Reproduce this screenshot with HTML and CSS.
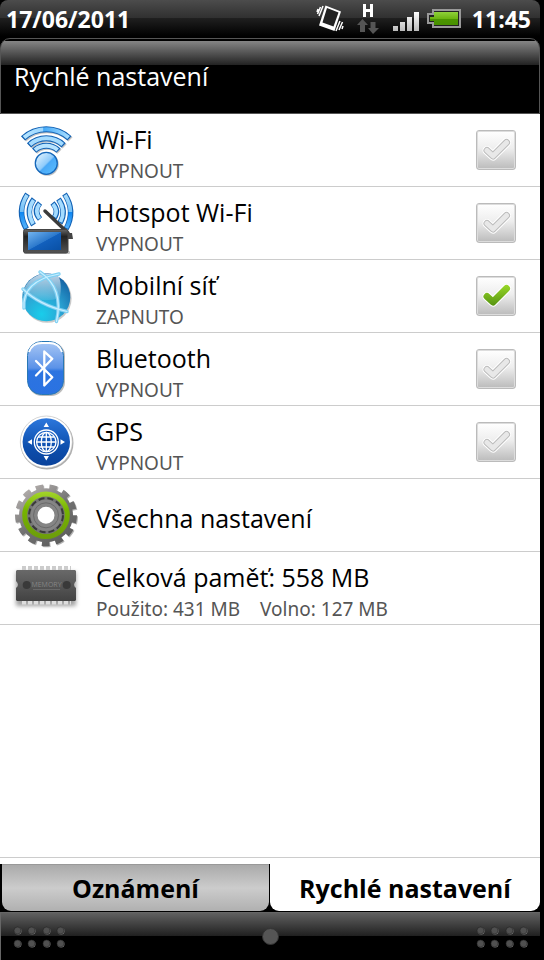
FILE: index.html
```
<!DOCTYPE html>
<html lang="cs">
<head>
  <meta charset="UTF-8">
  <meta name="viewport" content="width=device-width, initial-scale=1">
  <title>Rychlé nastavení</title>
  <link rel="stylesheet" href="styles.css">
</head>
<body>
  <div class="screen">
    <div class="status">
      <span class="date">17/06/2011</span>
      <div class="status-icons">
        <svg width="28" height="32" viewBox="0 0 28 32">
          <path d="M9.500 5.500 L25 11.500 L18.500 31 L3 25.500 Z" fill="#fff"/>
          <path d="M11 8 L22.500 12.500 L17.500 26.500 L6.500 22.500 Z" fill="#222"/>
          <path d="M7 6 L3 16 M4.500 7 L1.500 14 M2 9 L1 12 M24 21 L20 31 M26.500 22 L23 30 M27 26 L26 29" stroke="#fff" stroke-width="1.500"/>
        </svg>
        <svg width="24" height="32" viewBox="0 0 24 32">
          <path d="M8.500 4 V17 M15.500 4 V17 M8.500 10.500 H15.500" stroke="#fff" stroke-width="3" fill="none"/>
          <path d="M6.500 19 L12 25 H9 V32 H4 V25 H1 Z M14.500 22 H19.500 V28 H23 L17 34 L12 28 H14.500 Z" fill="#555"/>
        </svg>
        <svg width="24" height="32" viewBox="0 0 24 32">
          <defs><linearGradient id="sig" x1="0" y1="0" x2="0" y2="1"><stop offset="0" stop-color="#fff"/><stop offset="1" stop-color="#bbb"/></linearGradient></defs>
          <path d="M1 26 H6 V31 H1 Z M8 22 H13 V31 H8 Z M15 17 H20 V31 H15 Z M22 12 H27 V31 H22 Z" fill="url(#sig)"/>
        </svg>
        <svg width="34" height="32" viewBox="0 0 34 32">
          <defs><linearGradient id="bat" x1="0" y1="0" x2="0" y2="1"><stop offset="0" stop-color="#8fd23a"/><stop offset=".5" stop-color="#6db512"/><stop offset=".51" stop-color="#4c9600"/><stop offset="1" stop-color="#479000"/></linearGradient></defs>
          <path d="M5 11 H32 V28 H5 V24 H0 V15 H5 Z" fill="#222" stroke="#999" stroke-width="2"/>
          <path d="M6 13 H30 V26 H6 V22 H2 V18 H6 Z" fill="url(#bat)"/>
        </svg>
      </div>
      <span class="clock">11:45</span>
    </div>

    <header class="header"><h1>Rychlé nastavení</h1></header>

    <main class="list">
      <div class="row">
        <svg class="icon" viewBox="0 0 64 64">
          <defs>
            <linearGradient id="wave" x1="0" x2="1"><stop offset="0" stop-color="#b5e4ff"/><stop offset=".42" stop-color="#9bd6ff"/><stop offset=".44" stop-color="#45aaf8"/><stop offset="1" stop-color="#a5dcff"/></linearGradient>
            <linearGradient id="ball" x1="0" y1="0" x2="1" y2="1"><stop offset="0" stop-color="#f0faff"/><stop offset=".5" stop-color="#8fcbfb"/><stop offset=".55" stop-color="#4aa9f7"/><stop offset="1" stop-color="#5cc0ff"/></linearGradient>
          </defs>
          <g fill="none" stroke="#888" stroke-width="6" opacity=".5" transform="translate(1 1)">
            <path d="M9 20.400 A34 34 0 0 1 55.500 20.400 M15 27.300 A25 25 0 0 1 49.600 27.300 M20.100 32.700 A17.500 17.500 0 0 1 44.500 32.700"/>
          </g>
          <g fill="none" stroke="#1262b5" stroke-width="6" stroke-linejoin="round">
            <path d="M9 20.400 A34 34 0 0 1 55.500 20.400 M15 27.300 A25 25 0 0 1 49.600 27.300 M20.100 32.700 A17.500 17.500 0 0 1 44.500 32.700"/>
          </g>
          <g fill="none" stroke="url(#wave)" stroke-width="4">
            <path d="M10 19.600 A34 34 0 0 1 54.600 19.600"/>
            <path d="M15.900 26.500 A25 25 0 0 1 48.700 26.500" stroke="#a5dcff"/>
            <path d="M21 32 A17.500 17.500 0 0 1 43.600 32" stroke="#b8e4ff"/>
          </g>
          <circle cx="33.300" cy="46.300" r="11.500" fill="#888" opacity=".5"/>
          <circle cx="32.300" cy="45.300" r="11" fill="url(#ball)" stroke="#1567ba" stroke-width="1.300"/>
        </svg>
        <div class="text">
          <label class="title" for="wifi">Wi-Fi</label>
          <span class="sub">VYPNOUT</span>
        </div>
        <div class="check">
          <input type="checkbox" id="wifi">
          <svg viewBox="0 0 40 40"><path class="edge" d="M11 20.500 L17 26 L30.500 12.500"/><path class="rim" d="M11 20.500 L17 26 L30.500 12.500"/><path class="tick" d="M11 20.500 L17 26 L30.500 12.500"/></svg>
        </div>
      </div>

      <div class="row">
        <svg class="icon" viewBox="0 0 64 64">
          <defs>
            <linearGradient id="side" x1="0" y1="0" x2="0" y2="1"><stop offset="0" stop-color="#a9dcfb"/><stop offset=".5" stop-color="#72bff7"/><stop offset=".52" stop-color="#0d86f2"/><stop offset="1" stop-color="#54b2fb"/></linearGradient>
            <linearGradient id="tab" x1="0" y1="0" x2="1" y2="1"><stop offset="0" stop-color="#73b4ef"/><stop offset=".5" stop-color="#2c79cc"/><stop offset=".52" stop-color="#1260bd"/><stop offset="1" stop-color="#0950a5"/></linearGradient>
            <linearGradient id="dev" x1="0" y1="0" x2="0" y2="1"><stop offset="0" stop-color="#666"/><stop offset=".3" stop-color="#222"/><stop offset="1" stop-color="#555"/></linearGradient>
          </defs>
          <g fill="none" stroke="#1262b5" stroke-width="5.500">
            <path d="M13.500 3 Q2 20 12.500 38 M20 8 Q11 20 19.500 34 M26 12 Q19 20 26 28 M50.500 3 Q62 20 52 38 M44.500 8 Q53 20 46 32 M38.500 12 Q45.500 20 40 27"/>
          </g>
          <g fill="none" stroke-width="3.700">
            <path stroke="url(#side)" d="M13 4 Q3 20 12 37"/>
            <path stroke="url(#side)" d="M51 4 Q61 20 52.500 37"/>
            <path stroke="#a5dcff" d="M19.500 9 Q12 20 19 33 M25.500 13 Q20 20 25.500 27.500 M45 9 Q52 20 46.500 31 M39 13 Q44.500 20 40.500 26"/>
          </g>
          <path d="M31 20 L54 42" stroke="#3b3b3b" stroke-width="3.500" stroke-linecap="round"/>
          <path d="M50 42 H58 L59 48 H52 Z" fill="#444"/>
          <rect x="10" y="60" width="46" height="3" rx="1" fill="#999" opacity=".6"/>
          <rect x="9.500" y="38.500" width="44.500" height="23.500" rx="2" fill="url(#dev)" stroke="#444"/>
          <rect x="14" y="41" width="33" height="18" fill="url(#tab)"/>
        </svg>
        <div class="text">
          <label class="title" for="hotspot">Hotspot Wi-Fi</label>
          <span class="sub">VYPNOUT</span>
        </div>
        <div class="check">
          <input type="checkbox" id="hotspot">
          <svg viewBox="0 0 40 40"><path class="edge" d="M11 20.500 L17 26 L30.500 12.500"/><path class="rim" d="M11 20.500 L17 26 L30.500 12.500"/><path class="tick" d="M11 20.500 L17 26 L30.500 12.500"/></svg>
        </div>
      </div>

      <div class="row">
        <svg class="icon" viewBox="0 0 64 64">
          <defs>
            <radialGradient id="globe" cx=".4" cy=".85" r=".9"><stop offset="0" stop-color="#19cdeb"/><stop offset=".45" stop-color="#2ba5d4"/><stop offset="1" stop-color="#125a9e"/></radialGradient>
            <linearGradient id="shine" x1="0" y1="0" x2="0" y2="1"><stop offset="0" stop-color="#fff" stop-opacity=".75"/><stop offset="1" stop-color="#fff" stop-opacity=".1"/></linearGradient>
          </defs>
          <circle cx="33.300" cy="34.500" r="24.300" fill="#777" opacity=".4"/>
          <circle cx="32.300" cy="33.300" r="24" fill="url(#globe)"/>
          <path d="M9 30 A24 24 0 0 1 45 13 Q48 20 46 34 Q26 40 9 30 Z" fill="url(#shine)"/>
          <g fill="none" stroke="#7fd0f3" stroke-width="3.400" stroke-linecap="round">
            <path d="M26 8 Q50 24 42.500 57.500"/>
            <path d="M9 25 Q25 41 53 47.500"/>
            <path d="M10 44 Q8 17 45 10"/>
          </g>
          <g fill="none" stroke="#c9efff" stroke-width="1.200" stroke-linecap="round">
            <path d="M26 8 Q50 24 42.500 57.500"/>
            <path d="M9 25 Q25 41 53 47.500"/>
            <path d="M10 44 Q8 17 45 10"/>
          </g>
        </svg>
        <div class="text">
          <label class="title" for="mobile">Mobilní síť</label>
          <span class="sub">ZAPNUTO</span>
        </div>
        <div class="check">
          <input type="checkbox" id="mobile" checked>
          <svg viewBox="0 0 40 40">
            <defs><linearGradient id="green" gradientUnits="userSpaceOnUse" x1="0" y1="8" x2="0" y2="30"><stop offset="0" stop-color="#9bdb28"/><stop offset="1" stop-color="#559211"/></linearGradient></defs>
            <path class="edge" d="M11 20.500 L17 26 L30.500 12.500"/><path class="rim" d="M11 20.500 L17 26 L30.500 12.500"/><path class="tick" d="M11 20.500 L17 26 L30.500 12.500"/>
          </svg>
        </div>
      </div>

      <div class="row">
        <svg class="icon" viewBox="0 0 64 64">
          <defs>
            <linearGradient id="blue" x1="0" y1="0" x2="0" y2="1"><stop offset="0" stop-color="#a9c8f5"/><stop offset=".5" stop-color="#5b92e8"/><stop offset=".56" stop-color="#2c74e0"/><stop offset="1" stop-color="#2a72e2"/></linearGradient>
          </defs>
          <rect x="14" y="5" width="37" height="54" rx="14" fill="#777" opacity=".5"/>
          <rect x="13.500" y="4.500" width="36" height="53" rx="14" fill="url(#blue)" stroke="#2878b5"/>
          <path d="M15 15 Q18 6 28 6 H35 Q45 6 48 15" fill="none" stroke="#fff" stroke-width="2"/>
          <path d="M22 24 L38.300 40.300 L30.300 48.500 V14.500 L38.300 21.800 L22 38.500" fill="none" stroke="#fff" stroke-width="2.300" stroke-linecap="round" stroke-linejoin="round"/>
        </svg>
        <div class="text">
          <label class="title" for="bluetooth">Bluetooth</label>
          <span class="sub">VYPNOUT</span>
        </div>
        <div class="check">
          <input type="checkbox" id="bluetooth">
          <svg viewBox="0 0 40 40"><path class="edge" d="M11 20.500 L17 26 L30.500 12.500"/><path class="rim" d="M11 20.500 L17 26 L30.500 12.500"/><path class="tick" d="M11 20.500 L17 26 L30.500 12.500"/></svg>
        </div>
      </div>

      <div class="row">
        <svg class="icon" viewBox="0 0 64 64">
          <defs>
            <linearGradient id="gps-bg" x1="0" y1="0" x2="0" y2="1"><stop offset="0" stop-color="#2c77dc"/><stop offset=".6" stop-color="#0d4fae"/><stop offset="1" stop-color="#0a429b"/></linearGradient>
          </defs>
          <circle cx="33" cy="33" r="26.500" fill="#777" opacity=".6"/>
          <circle cx="32.300" cy="32" r="26" fill="#fff" stroke="#bbb" stroke-width=".6"/>
          <circle cx="32.300" cy="32" r="23.700" fill="url(#gps-bg)"/>
          <g fill="none" stroke="#fff" stroke-width="1.300">
            <circle cx="32.300" cy="32" r="12"/>
            <circle cx="32.300" cy="32" r="9.700"/>
            <ellipse cx="32.300" cy="32" rx="5" ry="9.700"/>
            <path d="M32.300 22 V42 M22.500 32 H42 M24 27 H40.500 M24 37 H40.500"/>
          </g>
          <path d="M32.300 12.500 L35 17 H29.600 Z M32.300 50.500 L35 46 H29.600 Z M13.500 32 L18 29.300 V34.700 Z M51 32 L46.500 29.300 V34.700 Z" fill="#fff"/>
        </svg>
        <div class="text">
          <label class="title" for="gps">GPS</label>
          <span class="sub">VYPNOUT</span>
        </div>
        <div class="check">
          <input type="checkbox" id="gps">
          <svg viewBox="0 0 40 40"><path class="edge" d="M11 20.500 L17 26 L30.500 12.500"/><path class="rim" d="M11 20.500 L17 26 L30.500 12.500"/><path class="tick" d="M11 20.500 L17 26 L30.500 12.500"/></svg>
        </div>
      </div>

      <div class="row single">
        <svg class="icon" viewBox="0 0 64 64">
          <defs>
            <linearGradient id="metal" gradientUnits="userSpaceOnUse" x1="12" y1="4" x2="52" y2="60"><stop offset="0" stop-color="#b5b0ae"/><stop offset=".5" stop-color="#737373"/><stop offset="1" stop-color="#5c5c5c"/></linearGradient>
            <linearGradient id="ring" gradientUnits="userSpaceOnUse" x1="0" y1="8" x2="0" y2="56"><stop offset="0" stop-color="#a5d62c"/><stop offset=".4" stop-color="#76b400"/><stop offset="1" stop-color="#6c9c0b"/></linearGradient>
          </defs>
          <g fill="none" stroke-width="6">
            <circle cx="33" cy="33.300" r="28" stroke="#666" pathLength="26" stroke-dasharray="1.100 .9" opacity=".5"/>
            <circle cx="32" cy="32.300" r="28" stroke="url(#metal)" pathLength="26" stroke-dasharray="1.100 .9"/>
          </g>
          <circle cx="32" cy="32.300" r="27" fill="url(#metal)"/>
          <circle cx="32" cy="32.300" r="21.300" fill="#767676" stroke="url(#ring)" stroke-width="5"/>
          <circle cx="32" cy="32.300" r="17" fill="none" stroke="#3a3a3a" stroke-width="2" stroke-dasharray="6 3"/>
          <circle cx="32" cy="32.300" r="12" fill="#fff" stroke="#858585" stroke-width="7"/>
          <circle cx="32" cy="32.300" r="12.500" fill="none" stroke="#6a6a6a" stroke-width="1"/>
        </svg>
        <div class="text">
          <a class="title" href="#">Všechna nastavení</a>
        </div>
      </div>

      <div class="row">
        <svg class="icon" viewBox="0 0 64 64">
          <defs>
            <linearGradient id="chip" x1="0" y1="0" x2="0" y2="1"><stop offset="0" stop-color="#696969"/><stop offset="1" stop-color="#424242"/></linearGradient>
            <filter id="soft" x="-20%" y="-20%" width="140%" height="150%"><feGaussianBlur stdDeviation="2"/></filter>
          </defs>
          <rect x="2" y="16" width="60" height="34" fill="#777" opacity=".7" filter="url(#soft)"/>
          <path d="M8 12 H57" stroke="#ccc" stroke-width="4" stroke-dasharray="4 2"/>
          <path d="M8 46.500 H57" stroke="#ddd" stroke-width="4" stroke-dasharray="4 2"/>
          <path d="M3 14 H61 L62 15 V25 Q58 29 62 32 V44 L61 45 H3 L2 44 V32 Q6 29 2 25 V15 Z" fill="url(#chip)"/>
          <circle cx="12.700" cy="29" r="4" fill="#393939"/>
          <circle cx="52.700" cy="29" r="4" fill="#393939"/>
          <text class="chip-text" x="32.500" y="31" text-anchor="middle">MEMORY</text>
          <path d="M19 33.500 H46" stroke="#747474" stroke-width=".7"/>
        </svg>
        <div class="text">
          <span class="title">Celková paměť: 558 MB</span>
          <span class="sub memory"><span>Použito: 431 MB</span><span>Volno: 127 MB</span></span>
        </div>
      </div>
    </main>

    <nav class="tabs">
      <button class="tab" type="button">Oznámení</button>
      <button class="tab active" type="button">Rychlé nastavení</button>
    </nav>

    <footer class="dock">
      <svg class="dots" width="54" height="24" viewBox="0 0 54 24">
        <g fill="#888"><circle cx="6" cy="6" r="3.500"/><circle cx="20" cy="6" r="3.500"/><circle cx="35" cy="6" r="3.500"/><circle cx="49" cy="6" r="3.500"/><circle cx="6" cy="19" r="3.500"/><circle cx="20" cy="19" r="3.500"/><circle cx="35" cy="19" r="3.500"/><circle cx="49" cy="19" r="3.500"/></g>
        <g fill="#505050" stroke="#222" stroke-width=".6"><circle cx="5.500" cy="5.500" r="3.500"/><circle cx="19.500" cy="5.500" r="3.500"/><circle cx="34.500" cy="5.500" r="3.500"/><circle cx="48.500" cy="5.500" r="3.500"/><circle cx="5.500" cy="18.500" r="3.500"/><circle cx="19.500" cy="18.500" r="3.500"/><circle cx="34.500" cy="18.500" r="3.500"/><circle cx="48.500" cy="18.500" r="3.500"/></g>
      </svg>
      <span class="knob"></span>
      <svg class="dots" width="54" height="24" viewBox="0 0 54 24">
        <g fill="#888"><circle cx="6" cy="6" r="3.500"/><circle cx="20" cy="6" r="3.500"/><circle cx="35" cy="6" r="3.500"/><circle cx="49" cy="6" r="3.500"/><circle cx="6" cy="19" r="3.500"/><circle cx="20" cy="19" r="3.500"/><circle cx="35" cy="19" r="3.500"/><circle cx="49" cy="19" r="3.500"/></g>
        <g fill="#505050" stroke="#222" stroke-width=".6"><circle cx="5.500" cy="5.500" r="3.500"/><circle cx="19.500" cy="5.500" r="3.500"/><circle cx="34.500" cy="5.500" r="3.500"/><circle cx="48.500" cy="5.500" r="3.500"/><circle cx="5.500" cy="18.500" r="3.500"/><circle cx="19.500" cy="18.500" r="3.500"/><circle cx="34.500" cy="18.500" r="3.500"/><circle cx="48.500" cy="18.500" r="3.500"/></g>
      </svg>
    </footer>
  </div>
</body>
</html>
```
FILE: styles.css
```
* { box-sizing: border-box; }
body { margin: 0; background: #000; font-family: "Open Sans", "Noto Sans", sans-serif; }
.screen { display: flex; flex-direction: column; min-height: 100vh; margin-right: 4px; }

.status { display: flex; align-items: flex-start; height: 38px; padding: 0 9px 0 6px; border-radius: 8px 8px 0 0; color: #fff; font-size: 23px; font-weight: 700; line-height: 38px; background: linear-gradient(#4c4c4c, #303030 18px, #202020 18px, #000 36px); }
.status-icons { display: flex; gap: 12px; margin-left: auto; margin-right: 10px; }
.status-icons svg { display: block; overflow: visible; }
.status-icons svg:last-child { margin-top: -1px; }

.header { height: 76px; padding: 2px 13px 0; border: 1px solid #555; border-radius: 10px 10px 0 0; background: linear-gradient(#858585, #222 24px, #000 24px) 0 2px no-repeat; }
.header h1 { margin: 0; padding-top: 18px; color: #fff; font-size: 25px; font-weight: 400; line-height: 34px; }

.list { flex: 1; background: #fff; border-bottom: 1px solid #ccc; }
.row { display: flex; height: 73px; padding: 0 24px 0 14px; border-bottom: 1px solid #ccc; }
.icon { width: 64px; height: 64px; margin: 4px 18px 0 0; flex: none; overflow: visible; }
.text { display: flex; flex: 1; flex-direction: column; padding-top: 8px; }
.single .text { padding-top: 22px; }
.title { color: #000; font-size: 25px; line-height: 34px; text-decoration: none; }
.sub { color: #555; font-family: "Noto Sans", "Open Sans", sans-serif; font-size: 19px; line-height: 30px; }
.memory { display: flex; gap: 20px; }
.chip-text { fill: #858585; font-size: 7px; font-weight: 400; }

/* box and tick share one grid cell */
.check { display: grid; width: 40px; height: 40px; margin-top: 16px; flex: none; }
.check input, .check svg { grid-area: 1 / 1; width: 40px; height: 40px; margin: 0; }
.check input { appearance: none; border: 1px solid #bbb; border-radius: 3px; background: linear-gradient(#fff, #eee 45%, #bbb); box-shadow: inset 0 0 0 1px #ddd; }
.check svg { pointer-events: none; }
.check path { fill: none; stroke-linecap: round; stroke-linejoin: round; }
.edge { stroke: #fff; stroke-width: 9; }
.rim { stroke: #bbb; stroke-width: 7; }
.tick { stroke: #e8e8e8; stroke-width: 5; }
input:checked + svg .rim { stroke: url(#green); }
input:checked + svg .tick { stroke: url(#green); }

.tabs { display: grid; grid-template-columns: 1fr 1fr; height: 54px; padding-bottom: 1px; background: linear-gradient(#fff 6px, #000 6px); }
.tab { margin: 6px 1px 0 2px; padding: 0; border: 0; border-top: 1px solid #999; border-radius: 0 0 9px 9px; background: linear-gradient(#aaa, #ccc 50%, #b0b0b0); color: #000; font: inherit; font-size: 25px; font-weight: 700; line-height: 46px; }
.tab.active { margin: 0; padding-top: 6px; border-top: 0; background: #fff; }

.dock { display: flex; align-items: center; justify-content: space-between; height: 48px; padding: 0 11px; border: solid #666; border-width: 1px 0 0 1px; background: linear-gradient(#606060, #202020 23px, #000 23px); }
.knob { width: 17px; height: 17px; border: 1px solid #333; border-radius: 50%; background: #555; }
```
